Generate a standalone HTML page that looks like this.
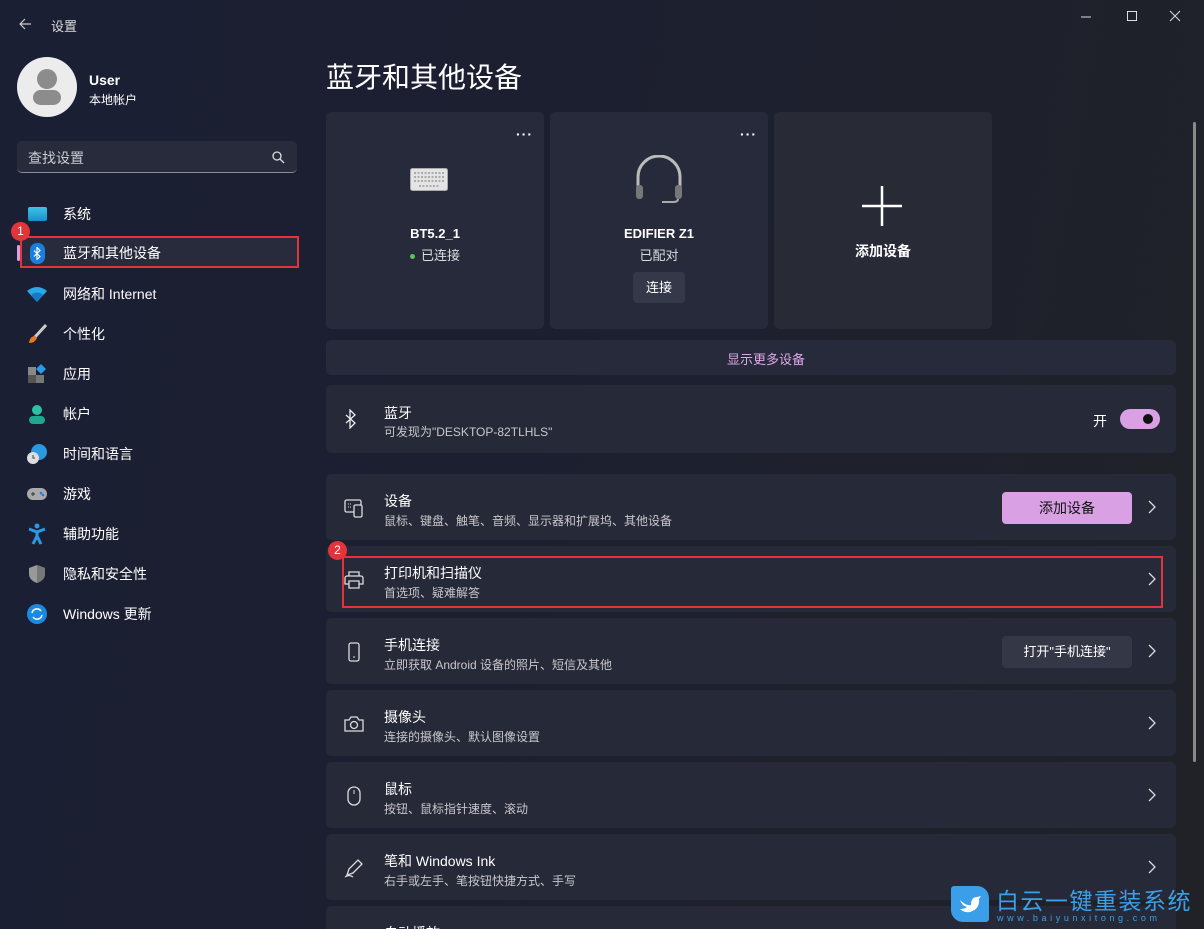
<!DOCTYPE html>
<html><head><meta charset="utf-8"><style>
*{margin:0;padding:0;box-sizing:border-box}
html,body{width:1204px;height:929px;overflow:hidden}
body{font-family:"Liberation Sans","Noto Sans CJK SC",sans-serif;color:#fff;background:linear-gradient(100deg,#1b1f34 0%,#1c1f30 40%,#202228 100%);position:relative}
.a{position:absolute;white-space:nowrap}
.nav{position:absolute;left:20px;height:36px;width:280px;font-size:14px;display:flex;align-items:center}
.nav .ic{width:22px;height:22px;margin-left:6px;margin-right:15px;display:flex;align-items:center;justify-content:center}
.card{position:absolute;background:#262a3a;border-radius:5px}
.row{position:absolute;left:326px;width:850px;height:66px;background:#262937;border-radius:5px}
.row .t{position:absolute;left:58px;top:17px;font-size:14px}
.row .s{position:absolute;left:58px;top:38px;font-size:12px;color:#c8c8cc}
.row .chev{position:absolute;right:20px;top:26px}
.row .ico{position:absolute;left:18px;top:23px}
</style></head><body>
<svg class="a" style="left:18px;top:17px" width="14" height="14" viewBox="0 0 14 14"><path d="M13 7H2M7 2L2 7l5 5" stroke="#ccc" stroke-width="1.2" fill="none"/></svg>
<div class="a" style="left:51px;top:16px;font-size:13px;color:#ddd">设置</div>
<svg class="a" style="left:1079px;top:10px" width="110" height="14"><path d="M2 7h10" stroke="#ddd"/><rect x="48.5" y="1.5" width="9" height="9" stroke="#ddd" fill="none"/><path d="M91 1l10 10M101 1L91 11" stroke="#ddd"/></svg>
<div class="a" style="left:17px;top:57px;width:60px;height:60px;border-radius:50%;background:#ececec"></div>
<div class="a" style="left:37px;top:69px;width:20px;height:20px;border-radius:50%;background:#8c8c8c"></div>
<div class="a" style="left:33px;top:90px;width:28px;height:15px;border-radius:8px;background:#8c8c8c"></div>
<div class="a" style="left:89px;top:72px;font-size:14px;font-weight:bold">User</div>
<div class="a" style="left:89px;top:91px;font-size:12px">本地帐户</div>
<div class="a" style="left:17px;top:141px;width:280px;height:32px;background:#272b3c;border-radius:5px;border-bottom:1px solid #8a8d99"></div>
<div class="a" style="left:28px;top:148px;font-size:14px;color:#ccc">查找设置</div>
<svg class="a" style="left:272px;top:151px" width="13" height="13"><circle cx="5" cy="5" r="4" stroke="#ddd" fill="none" stroke-width="1.3"/><path d="M8 8l4 4" stroke="#ddd" stroke-width="1.3"/></svg>
<div class="nav" style="top:196px"><span class="ic"><span style="width:19px;height:14px;background:linear-gradient(#3cc4e8,#1a8fc8);border-radius:2px;display:block"></span></span>系统</div>
<div class="a" style="left:20px;top:236px;width:279px;height:32px;background:#272b3c;border-radius:4px"></div>
<div class="a" style="left:17px;top:245px;width:3px;height:16px;background:#d8a0e0;border-radius:2px"></div>
<div class="nav" style="top:235px"><span class="ic"><span style="width:15px;height:21px;background:#1a7ee0;border-radius:7px;display:flex;align-items:center;justify-content:center"><svg width="9" height="13" viewBox="0 0 9 13"><path d="M1 3.5l6 6-3 3V.5l3 3-6 6" stroke="#fff" stroke-width="1.2" fill="none"/></svg></span></span>蓝牙和其他设备</div>
<div class="a" style="left:20px;top:236px;width:279px;height:32px;border:2px solid #e2343a"></div>
<div class="a" style="left:11px;top:222px;width:19px;height:19px;border-radius:50%;background:#e2343a;font-size:12px;text-align:center;line-height:19px">1</div>
<div class="nav" style="top:276px"><span class="ic"><svg width="20" height="16" viewBox="0 0 20 16"><path d="M0 5Q10-3 20 5L10 16Z" fill="#2aa8ea"/><path d="M4 9Q10 4 16 9L10 16Z" fill="#1778c8"/></svg></span>网络和 Internet</div>
<div class="nav" style="top:316px"><span class="ic"><svg width="20" height="20"><path d="M19 1L8 13" stroke="#ccc" stroke-width="3"/><path d="M8 12q-5 0-6 7q6 0 8-5z" fill="#e8782a"/></svg></span>个性化</div>
<div class="nav" style="top:356px"><span class="ic"><svg width="20" height="20"><rect x="1" y="3" width="8" height="8" fill="#888"/><rect x="1" y="11" width="8" height="8" fill="#555"/><rect x="9" y="11" width="8" height="8" fill="#777"/><path d="M14 0l5 5-5 5-5-5z" fill="#2a9ae8"/></svg></span>应用</div>
<div class="nav" style="top:396px"><span class="ic"><svg width="20" height="20"><circle cx="10" cy="6" r="5" fill="#2cc0a8"/><rect x="2" y="12" width="16" height="8" rx="4" fill="#1fa890"/></svg></span>帐户</div>
<div class="nav" style="top:436px"><span class="ic"><svg width="22" height="22"><circle cx="13" cy="9" r="8" fill="#2a9ae0"/><circle cx="7" cy="15" r="6" fill="#ddd"/><path d="M7 12v3h2" stroke="#444" fill="none"/></svg></span>时间和语言</div>
<div class="nav" style="top:476px"><span class="ic"><svg width="22" height="16"><rect x="1" y="2" width="20" height="12" rx="6" fill="#aaa"/><path d="M5 8h4M7 6v4" stroke="#333"/><circle cx="15" cy="7" r="1.3" fill="#1a7ee0"/><circle cx="17" cy="9" r="1.3" fill="#1a7ee0"/></svg></span>游戏</div>
<div class="nav" style="top:516px"><span class="ic"><svg width="20" height="22"><circle cx="10" cy="3" r="2.5" fill="#2a9ae8"/><path d="M2 6l8 3 8-3M10 9v4l-4 8M10 13l4 8" stroke="#2a9ae8" stroke-width="3" fill="none"/></svg></span>辅助功能</div>
<div class="nav" style="top:556px"><span class="ic"><svg width="18" height="20"><path d="M9 1l8 3v6q0 6-8 9-8-3-8-9V4z" fill="#999"/><path d="M9 1l8 3v6q0 6-8 9z" fill="#777"/></svg></span>隐私和安全性</div>
<div class="nav" style="top:596px"><span class="ic"><svg width="20" height="20"><circle cx="10" cy="10" r="10" fill="#1a8ae0"/><path d="M5 9a5 5 0 0 1 9-2M15 11a5 5 0 0 1-9 2" stroke="#fff" stroke-width="1.5" fill="none"/></svg></span>Windows 更新</div>
<div class="a" style="left:326px;top:56px;font-size:28px">蓝牙和其他设备</div>
<div class="card" style="left:326px;top:112px;width:218px;height:217px"></div>
<div class="card" style="left:550px;top:112px;width:218px;height:217px"></div>
<div class="card" style="left:774px;top:112px;width:218px;height:217px;background:#282a36"></div>
<div class="a" style="left:516px;top:126px;font-size:14px;letter-spacing:1px;font-weight:bold">···</div>
<div class="a" style="left:740px;top:126px;font-size:14px;letter-spacing:1px;font-weight:bold">···</div>
<svg class="a" style="left:410px;top:168px" width="38" height="23"><rect x="0.5" y="0.5" width="37" height="22" rx="2" fill="#e4e4e4" stroke="#aaa"/><g stroke="#9a9a9a" stroke-width="1.5"><path d="M4 5h30M4 9h30M4 13h30M9 18h20" stroke-dasharray="2 1.5"/></g></svg>
<svg class="a" style="left:633px;top:155px" width="52" height="50" viewBox="0 0 52 50"><path d="M5 32V22a21 21 0 0 1 42 0v10" stroke="#bbb" stroke-width="3" fill="none"/><rect x="3" y="30" width="7" height="14" rx="3" fill="#777"/><rect x="42" y="30" width="7" height="14" rx="3" fill="#777"/><path d="M45 44q0 3-5 3h-11" stroke="#aaa" stroke-width="2" fill="none"/></svg>
<div class="a" style="left:326px;top:226px;width:218px;text-align:center;font-size:13px;font-weight:bold">BT5.2_1</div>
<div class="a" style="left:326px;top:245px;width:218px;text-align:center;font-size:13px;color:#ddd"><span style="display:inline-block;width:5px;height:5px;border-radius:50%;background:#5ac45a;vertical-align:middle;margin-right:6px"></span>已连接</div>
<div class="a" style="left:550px;top:226px;width:218px;text-align:center;font-size:13px;font-weight:bold">EDIFIER Z1</div>
<div class="a" style="left:550px;top:245px;width:218px;text-align:center;font-size:13px;color:#ddd">已配对</div>
<div class="a" style="left:633px;top:272px;width:52px;height:31px;background:#343848;border-radius:4px;font-size:13px;text-align:center;line-height:31px">连接</div>
<svg class="a" style="left:862px;top:186px" width="40" height="40"><path d="M20 0v40M0 20h40" stroke="#fff" stroke-width="2.5"/></svg>
<div class="a" style="left:774px;top:241px;width:218px;text-align:center;font-size:14px;font-weight:bold">添加设备</div>
<div class="card" style="left:326px;top:340px;width:850px;height:35px;background:#262a3a"></div>
<div class="a" style="left:326px;top:349px;width:880px;text-align:center;font-size:13px;color:#e0a8ea">显示更多设备</div>
<div class="row" style="top:385px;height:68px"><svg class="ico" style="top:24px" width="14" height="20" viewBox="0 0 14 20"><path d="M2 6l9 8-5 5V1l5 5-9 8" stroke="#eee" stroke-width="1.3" fill="none"/></svg><div class="t" style="top:18px">蓝牙</div><div class="s" style="top:38px">可发现为"DESKTOP-82TLHLS"</div>
<div class="a" style="left:767px;top:26px;font-size:14px">开</div>
<div class="a" style="left:794px;top:24px;width:40px;height:20px;border-radius:10px;background:#d9a0e4"></div><div class="a" style="left:817px;top:29px;width:10px;height:10px;border-radius:50%;background:#111"></div></div>
<div class="row" style="top:474px"><svg class="ico" style="top:24px" width="20" height="20"><rect x="1" y="2" width="16" height="12" rx="1.5" stroke="#ddd" fill="none" stroke-width="1.3"/><rect x="10" y="7" width="8" height="12" rx="1.5" fill="#262937" stroke="#ddd" stroke-width="1.3"/><path d="M4 6h4M4 9h4" stroke="#ddd" stroke-dasharray="1 1"/></svg><div class="t">设备</div><div class="s">鼠标、键盘、触笔、音频、显示器和扩展坞、其他设备</div>
<div class="a" style="left:676px;top:18px;width:130px;height:32px;border-radius:4px;background:#d9a0e4;color:#111;font-size:14px;text-align:center;line-height:32px">添加设备</div>
<svg class="chev" width="8" height="14"><path d="M1 1l6 6-6 6" stroke="#ddd" stroke-width="1.3" fill="none"/></svg></div>
<div class="row" style="top:546px"><svg class="ico" style="top:24px" width="20" height="20"><path d="M5 6V2h10v4M3 6h14a2 2 0 0 1 2 2v6h-4M5 14H1V8a2 2 0 0 1 2-2M5 11h10v7H5z" stroke="#ddd" stroke-width="1.3" fill="none"/></svg><div class="t">打印机和扫描仪</div><div class="s">首选项、疑难解答</div><svg class="chev" width="8" height="14"><path d="M1 1l6 6-6 6" stroke="#ddd" stroke-width="1.3" fill="none"/></svg></div>
<div class="a" style="left:342px;top:556px;width:821px;height:52px;border:2px solid #e2343a"></div>
<div class="a" style="left:328px;top:541px;width:19px;height:19px;border-radius:50%;background:#e2343a;font-size:12px;text-align:center;line-height:19px">2</div>
<div class="row" style="top:618px"><svg class="ico" style="top:24px" width="20" height="20"><rect x="5" y="1" width="10" height="18" rx="2" stroke="#ddd" fill="none" stroke-width="1.3"/><path d="M9 15h2" stroke="#ddd"/></svg><div class="t">手机连接</div><div class="s">立即获取 Android 设备的照片、短信及其他</div>
<div class="a" style="left:676px;top:18px;width:130px;height:32px;border-radius:4px;background:#333746;font-size:13px;text-align:center;line-height:32px">打开"手机连接"</div>
<svg class="chev" width="8" height="14"><path d="M1 1l6 6-6 6" stroke="#ddd" stroke-width="1.3" fill="none"/></svg></div>
<div class="row" style="top:690px"><svg class="ico" style="top:24px" width="20" height="20"><path d="M1 6h4l2-3h6l2 3h4v11H1z" stroke="#ddd" fill="none" stroke-width="1.3"/><circle cx="10" cy="11" r="3.5" stroke="#ddd" fill="none" stroke-width="1.3"/></svg><div class="t">摄像头</div><div class="s">连接的摄像头、默认图像设置</div><svg class="chev" width="8" height="14"><path d="M1 1l6 6-6 6" stroke="#ddd" stroke-width="1.3" fill="none"/></svg></div>
<div class="row" style="top:762px"><svg class="ico" style="top:24px" width="20" height="20"><rect x="4" y="1" width="12" height="18" rx="6" stroke="#ddd" fill="none" stroke-width="1.3"/><path d="M10 4v4" stroke="#ddd"/></svg><div class="t">鼠标</div><div class="s">按钮、鼠标指针速度、滚动</div><svg class="chev" width="8" height="14"><path d="M1 1l6 6-6 6" stroke="#ddd" stroke-width="1.3" fill="none"/></svg></div>
<div class="row" style="top:834px"><svg class="ico" style="top:24px" width="20" height="20"><path d="M3 17l2-6 9-9 4 4-9 9zM1 19q4-3 8 0" stroke="#ddd" fill="none" stroke-width="1.3"/></svg><div class="t">笔和 Windows Ink</div><div class="s">右手或左手、笔按钮快捷方式、手写</div><svg class="chev" width="8" height="14"><path d="M1 1l6 6-6 6" stroke="#ddd" stroke-width="1.3" fill="none"/></svg></div>
<div class="row" style="top:906px"><div class="t">自动播放</div></div>
<div class="a" style="left:1193px;top:122px;width:3px;height:640px;background:#8a8a8a;border-radius:2px"></div>
<div class="a" style="left:951px;top:886px;width:38px;height:36px;background:#3a9ee8;border-radius:3px 12px 3px 12px"></div>
<svg class="a" style="left:957px;top:892px" width="26" height="24"><path d="M3 8q6 6 11 5 0-8 6-8l4-1-2 3q1 10-9 13-6 1-10-3 5 0 7-2-5-1-7-7z" fill="#fff"/></svg>
<div class="a" style="left:996px;top:884px;font-size:23px;color:#3aa0e8;letter-spacing:1.5px;font-family:'Noto Sans CJK SC',sans-serif;line-height:30px">白云一键重装系统</div>
<div class="a" style="left:997px;top:913px;font-size:9px;color:#3aa0e8;letter-spacing:3.6px">www.baiyunxitong.com</div>
</body></html>
